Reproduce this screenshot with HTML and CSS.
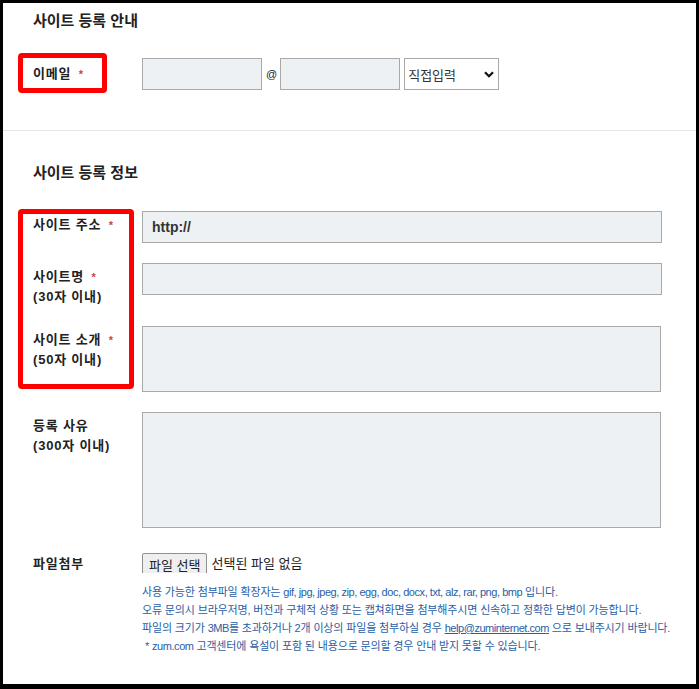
FILE: index.html
```html
<!DOCTYPE html>
<html lang="ko">
<head>
    <meta charset="UTF-8">
    <meta name="viewport" content="width=device-width, initial-scale=1.0">
    <title>사이트 등록</title>

    <link rel="stylesheet" href="styles.css">
</head>
<body>

    <div class="page">

        <!-- 등록 안내 -->
        <section class="block block-guide">
            <h3 class="block-title">사이트 등록 안내</h3>

            <div class="row row-email">
                <label class="row-label">이메일 <em class="req">*</em></label>
                <div class="email-field">
                    <input class="text-input short" type="text">
                    <span class="at">@</span>
                    <input class="text-input short" type="text">
                    <div class="select-wrap">
                        <select class="domain-select">
                            <option>직접입력</option>
                        </select>
                        <svg class="chevron" width="10" height="7" viewBox="0 0 10 7">
                            <path d="M1 1.2 L5 5.2 L9 1.2" fill="none" stroke="#111" stroke-width="2.2"/>
                        </svg>
                    </div>
                </div>
            </div>

            <div class="mark mark-email"></div>
        </section>

        <!-- 등록 정보 -->
        <section class="block block-info">
            <h3 class="block-title">사이트 등록 정보</h3>

            <div class="row">
                <label class="row-label">사이트 주소 <em class="req">*</em></label>
                <input class="text-input wide url-input" type="text" value="http://">
            </div>

            <div class="row row-name">
                <label class="row-label">사이트명 <em class="req">*</em><br>(30자 이내)</label>
                <input class="text-input wide" type="text">
            </div>

            <div class="row">
                <label class="row-label">사이트 소개 <em class="req">*</em><br>(50자 이내)</label>
                <textarea class="text-area intro-area"></textarea>
            </div>

            <div class="row row-reason">
                <label class="row-label">등록 사유<br>(300자 이내)</label>
                <textarea class="text-area reason-area"></textarea>
            </div>

            <div class="row row-file">
                <label class="row-label">파일첨부</label>
                <div>
                    <div class="file-line">
                        <span class="file-box"><button class="file-btn" type="button">파일 선택</button></span>
                        <span class="file-name">선택된 파일 없음</span>
                    </div>
                    <ul class="help">
                        <li>사용 가능한 첨부파일 확장자는 <span class="en">gif, jpg, jpeg, zip, egg, doc, docx, txt, alz, rar, png, bmp</span> 입니다.</li>
                        <li>오류 문의시 브라우저명, 버전과 구체적 상황 또는 캡쳐화면을 첨부해주시면 신속하고 정확한 답변이 가능합니다.</li>
                        <li>파일의 크기가 <span class="en">3MB</span>를 초과하거나 2개 이상의 파일을 첨부하실 경우 <a class="en" href="#">help@zuminternet.com</a> 으로 보내주시기 바랍니다.</li>
                        <li class="note">* <span class="en">zum.com</span> 고객센터에 욕설이 포함 된 내용으로 문의할 경우 안내 받지 못할 수 있습니다.</li>
                    </ul>
                </div>
            </div>

            <div class="mark mark-info"></div>
        </section>

    </div>

</body>
</html>
```

FILE: styles.css
```css
body {
    margin: 0;
    background: #000;
    font-family: "Liberation Sans", "Noto Sans CJK KR", sans-serif;
    color: #222;
}

.page {
    margin: 3px 3px 5px 3px;
    height: 681px;
    background: #fff;
    overflow: hidden;
}

/* Sections */
.block {
    position: relative;
    padding: 8px 0 40px 30px;
}

.block-info {
    border-top: 1px solid #e6e6e6;
    padding-top: 32px;
}

.block-title {
    margin: 0 0 27px;
    font-size: 15px;
    line-height: 20px;
    font-weight: bold;
    color: #222;
}

.block-info .block-title {
    margin-bottom: 28px;
}

/* Rows */
.row {
    display: grid;
    grid-template-columns: 109px 520px;
    align-items: start;
    margin-bottom: 20px;
}

.row-email {
    align-items: center;
    margin-bottom: 0;
}

.row-name {
    margin-bottom: 19px;
}

.row-reason {
    margin-bottom: 25px;
}

.row-label {
    padding-top: 4px;
    font-size: 13px;
    line-height: 20px;
    font-weight: bold;
    letter-spacing: 0.8px;
    color: #222;
}

.row-email .row-label {
    padding-top: 0;
}

.row-file .row-label {
    padding-top: 1px;
}

.req {
    margin-left: 3px;
    font-style: normal;
    font-size: 11px;
    color: #c2474f;
}

/* Inputs */
.text-input {
    box-sizing: border-box;
    height: 32px;
    margin: 0;
    padding: 0 9px;
    border: 1px solid #a9a9a9;
    background: #eef1f4;
    font-family: inherit;
    font-size: 14px;
    font-weight: bold;
    color: #333;
}

.text-input.short {
    width: 120px;
}

.text-input.wide {
    width: 520px;
}

.text-area {
    box-sizing: border-box;
    display: block;
    width: 519px;
    margin: 0;
    border: 1px solid #a9a9a9;
    background: #eef1f4;
    resize: none;
}

.intro-area {
    height: 66px;
}

.reason-area {
    height: 116px;
}

.email-field {
    display: flex;
    align-items: center;
}

.at {
    margin: 0 3px 0 4px;
    font-size: 11px;
    color: #222;
}

.select-wrap {
    position: relative;
    margin-left: 4px;
}

.domain-select {
    appearance: none;
    -webkit-appearance: none;
    box-sizing: border-box;
    display: block;
    width: 95px;
    height: 32px;
    padding: 0 0 0 3px;
    border: 1px solid #a9a9a9;
    border-radius: 0;
    background: #fff;
    font-family: "Noto Sans CJK KR", sans-serif;
    font-size: 13px;
    color: #333;
}

.chevron {
    position: absolute;
    right: 5px;
    top: 13px;
}

/* File attach */
.file-line {
    display: flex;
    align-items: flex-start;
    font-size: 13px;
}

.file-box {
    display: block;
    height: 20px;
    overflow: hidden;
}

.file-btn {
    height: 23px;
    padding: 0 6px;
    border: 1px solid #8f8f8f;
    border-radius: 2px;
    background: #efefef;
    font-family: "Noto Sans CJK KR", sans-serif;
    font-size: 13px;
    color: #222;
}

.file-name {
    margin-left: 4px;
    line-height: 20px;
    font-family: "Noto Sans CJK KR", sans-serif;
}

.help {
    list-style: none;
    margin: 10px 0 0;
    padding: 0;
    font-size: 11px;
    line-height: 18px;
    letter-spacing: -0.15px;
    color: #2a5ea6;
    white-space: nowrap;
}

.help .en {
    letter-spacing: -0.45px;
}

.help a {
    color: #2a5ea6;
}

.help .note {
    padding-left: 3px;
}

/* Red highlight boxes */
.mark {
    position: absolute;
    box-sizing: border-box;
    border: 5px solid #f00;
    border-radius: 4px;
}

.mark-email {
    left: 15px;
    top: 50px;
    width: 89px;
    height: 40px;
}

.mark-info {
    left: 15px;
    top: 78px;
    width: 116px;
    height: 180px;
}
```
